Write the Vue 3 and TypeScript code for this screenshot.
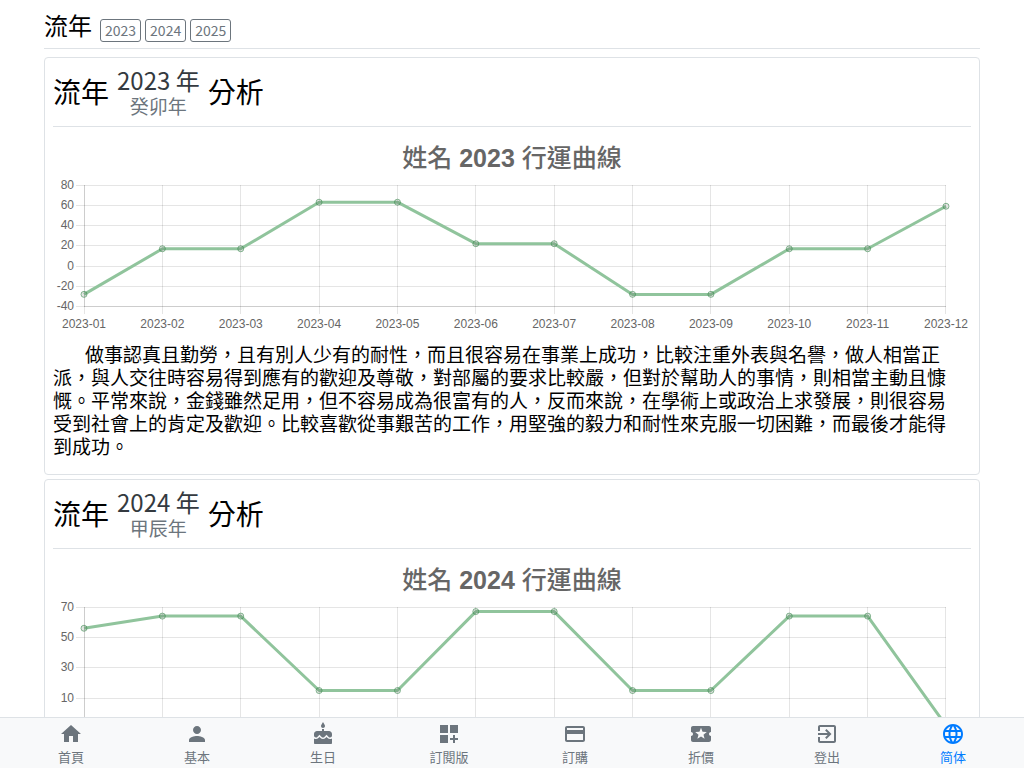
<script setup lang="ts">
interface YearReport {
  year: number
  ganzhi: string
  max: number
  min: number
  step: number
  values: number[]
  text?: string
}

interface NavItem {
  label: string
  icon: string
  active?: boolean
}

const years = [2023, 2024, 2025]

const reports: YearReport[] = [
  {
    year: 2023,
    ganzhi: '癸卯年',
    max: 80,
    min: -40,
    step: 20,
    values: [-28, 17, 17, 63, 63, 22, 22, -28, -28, 17, 17, 59],
    text: '做事認真且勤勞，且有別人少有的耐性，而且很容易在事業上成功，比較注重外表與名譽，做人相當正派，與人交往時容易得到應有的歡迎及尊敬，對部屬的要求比較嚴，但對於幫助人的事情，則相當主動且慷慨。平常來說，金錢雖然足用，但不容易成為很富有的人，反而來說，在學術上或政治上求發展，則很容易受到社會上的肯定及歡迎。比較喜歡從事艱苦的工作，用堅強的毅力和耐性來克服一切困難，而最後才能得到成功。',
  },
  {
    year: 2024,
    ganzhi: '甲辰年',
    max: 70,
    min: -10,
    step: 20,
    values: [56, 64, 64, 15, 15, 67, 67, 15, 15, 64, 64, -8],
  },
]

const area = { left: 31, right: 893, top: 58, bottom: 179.5 }

const xAt = (i: number): number => area.left + ((area.right - area.left) * i) / 11
const yAt = (r: YearReport, v: number): number =>
  area.top + ((r.max - v) / (r.max - r.min)) * (area.bottom - area.top)
const crisp = (n: number): number => Math.floor(n) + 0.5

const ticks = (r: YearReport): number[] => {
  const out: number[] = []
  for (let v = r.max; v >= r.min; v -= r.step) out.push(v)
  return out
}
const month = (r: YearReport, i: number): string => `${r.year}-${String(i + 1).padStart(2, '0')}`
const line = (r: YearReport): string =>
  r.values.map((v, i) => `${xAt(i).toFixed(1)},${yAt(r, v).toFixed(1)}`).join(' ')

const nav: NavItem[] = [
  { label: '首頁', icon: 'M10 20v-6h4v6h5v-8h3L12 3 2 12h3v8z' },
  {
    label: '基本',
    icon: 'M12 12c2.21 0 4-1.79 4-4s-1.79-4-4-4-4 1.79-4 4 1.79 4 4 4zm0 2c-2.67 0-8 1.34-8 4v2h16v-2c0-2.66-5.33-4-8-4z',
  },
  {
    label: '生日',
    icon: 'M12 6c1.11 0 2-.9 2-2 0-.38-.1-.73-.29-1.03L12 0l-1.71 2.97c-.19.3-.29.65-.29 1.03 0 1.1.9 2 2 2zm4.6 9.99l-1.07-1.07-1.08 1.07c-1.3 1.3-3.58 1.31-4.89 0l-1.07-1.07-1.09 1.07C6.75 16.64 5.88 17 4.96 17c-.73 0-1.4-.23-1.96-.61V21c0 .55.45 1 1 1h16c.55 0 1-.45 1-1v-4.61c-.56.38-1.23.61-1.96.61-.92 0-1.79-.36-2.44-1.01zM18 9h-5V7h-2v2H6c-1.66 0-3 1.34-3 3v1.54c0 1.08.88 1.96 1.96 1.96.52 0 1.02-.2 1.38-.57l2.14-2.13 2.13 2.13c.74.74 2.03.74 2.77 0l2.14-2.13 2.13 2.13c.37.37.86.57 1.38.57 1.08 0 1.96-.88 1.96-1.96V12C21 10.34 19.66 9 18 9z',
  },
  {
    label: '訂閱版',
    icon: 'M3 3h8v8H3zM13 3h8v8h-8zM3 13h8v8H3zM18 13h-2v3h-3v2h3v3h2v-3h3v-2h-3z',
  },
  {
    label: '訂購',
    icon: 'M20 4H4c-1.11 0-1.99.89-1.99 2L2 18c0 1.11.89 2 2 2h16c1.11 0 2-.89 2-2V6c0-1.11-.89-2-2-2zm0 14H4v-6h16v6zm0-10H4V6h16v2z',
  },
  {
    label: '折價',
    icon: 'M20 12c0-1.1.9-2 2-2V6c0-1.1-.9-2-2-2H4c-1.1 0-1.99.9-1.99 2v4c1.1 0 1.99.9 1.99 2s-.89 2-2 2v4c0 1.1.9 2 2 2h16c1.1 0 2-.9 2-2v-4c-1.1 0-2-.9-2-2zm-4.42 4.8L12 14.5l-3.58 2.3 1.08-4.12-3.29-2.69 4.24-.25L12 5.8l1.54 3.95 4.24.25-3.29 2.69 1.09 4.11z',
  },
  {
    label: '登出',
    icon: 'M10.09 15.59L11.5 17l5-5-5-5-1.41 1.41L12.67 11H3v2h9.67l-2.58 2.59zM19 3H5c-1.11 0-2 .9-2 2v4h2V5h14v14H5v-4H3v4c0 1.1.89 2 2 2h14c1.1 0 2-.9 2-2V5c0-1.1-.9-2-2-2z',
  },
  {
    label: '简体',
    active: true,
    icon: 'M11.99 2C6.47 2 2 6.48 2 12s4.47 10 9.99 10C17.52 22 22 17.52 22 12S17.52 2 11.99 2zm6.93 6h-2.95c-.32-1.25-.78-2.45-1.38-3.56 1.84.63 3.37 1.91 4.33 3.56zM12 4.04c.83 1.2 1.48 2.53 1.91 3.96h-3.82c.43-1.43 1.08-2.76 1.91-3.96zM4.26 14C4.1 13.36 4 12.69 4 12s.1-1.36.26-2h3.38c-.08.66-.14 1.32-.14 2s.06 1.34.14 2H4.26zm.82 2h2.95c.32 1.25.78 2.45 1.38 3.56-1.84-.63-3.37-1.9-4.33-3.56zm2.95-8H5.08c.96-1.66 2.49-2.93 4.33-3.56C8.81 5.55 8.35 6.75 8.03 8zM12 19.96c-.83-1.2-1.48-2.53-1.91-3.96h3.82c-.43 1.43-1.08 2.76-1.91 3.96zM14.34 14H9.66c-.09-.66-.16-1.32-.16-2s.07-1.35.16-2h4.68c.09.65.16 1.32.16 2s-.07 1.34-.16 2zm.25 5.56c.6-1.11 1.06-2.31 1.38-3.56h2.95c-.96 1.65-2.49 2.93-4.33 3.56zM16.36 14c.08-.66.14-1.32.14-2s-.06-1.34-.14-2h3.38c.16.64.26 1.31.26 2s-.1 1.36-.26 2h-3.38z',
  },
]
</script>

<template>
  <div class="page">
    <main class="content">
      <div class="container">
        <header class="top">
          <h1>流年</h1>
          <div class="years">
            <a v-for="y in years" :key="y" :href="`#y${y}`">{{ y }}</a>
          </div>
        </header>

        <section v-for="r in reports" :id="`y${r.year}`" :key="r.year" class="card">
          <h2 class="card-title">
            <span>流年</span>
            <span class="stack">
              <span class="year">{{ r.year }} 年</span>
              <span class="ganzhi">{{ r.ganzhi }}</span>
            </span>
            <span>分析</span>
          </h2>

          <svg class="chart" viewBox="0 0 918 208" role="img" :aria-label="`姓名 ${r.year} 行運曲線`">
            <text class="chart-title" x="459" y="40"><tspan class="han">姓名</tspan> {{ r.year }} <tspan class="han">行運曲線</tspan></text>
            <g class="grid">
              <line
                v-for="v in ticks(r)"
                :key="v"
                x1="23"
                :x2="area.right"
                :y1="crisp(yAt(r, v))"
                :y2="crisp(yAt(r, v))"
              />
              <line
                v-for="(_, i) in r.values"
                :key="i"
                :x1="Math.min(crisp(xAt(i)), 892.5)"
                :x2="Math.min(crisp(xAt(i)), 892.5)"
                :y1="area.top"
                y2="187"
              />
              <line x1="31.5" x2="31.5" :y1="area.top" y2="180" />
              <line x1="31" x2="893" y1="179.5" y2="179.5" />
            </g>
            <g class="labels">
              <text v-for="v in ticks(r)" :key="v" class="y-label" x="21" :y="yAt(r, v) + 3.5">{{ v }}</text>
              <text v-for="(_, i) in r.values" :key="i" class="x-label" :x="xAt(i)" y="201">{{ month(r, i) }}</text>
            </g>
            <polyline class="curve" :points="line(r)" />
            <circle
              v-for="(v, i) in r.values"
              :key="i"
              class="dot"
              :cx="xAt(i)"
              :cy="yAt(r, v)"
              r="3"
            />
          </svg>

          <p v-if="r.text" class="analysis">{{ r.text }}</p>
        </section>
      </div>
    </main>

    <nav class="bottom-nav">
      <a v-for="n in nav" :key="n.label" href="#" :class="{ active: n.active }">
        <svg viewBox="0 0 24 24" aria-hidden="true"><path :d="n.icon" /></svg>
        <span>{{ n.label }}</span>
      </a>
    </nav>
  </div>
</template>

<style>
body {
  margin: 0;
  background: #fff;
}
</style>

<style scoped>
.page {
  display: flex;
  flex-direction: column;
  height: 100vh;
  color: #000;
  font-family: 'Noto Sans CJK TC', sans-serif;
}

.content {
  flex: 1;
  min-height: 0;
  overflow-y: auto;
  scrollbar-width: none;
}

.container {
  max-width: 936px;
  margin: 0 auto;
  padding: 0 12px;
}

.top {
  display: flex;
  align-items: flex-end;
  gap: 8px;
  margin-bottom: 8px;
  padding: 8px 0 6px;
  border-bottom: 1px solid #dee2e6;
}

.top h1 {
  margin: 0;
  font-size: 24px;
  font-weight: 400;
  line-height: 34px;
}

.years {
  display: flex;
  gap: 4px;
}

.years a {
  padding: 0 4px;
  border: 1px solid #6c757d;
  border-radius: 3px;
  color: #6c757d;
  font-size: 14px;
  line-height: 21px;
  text-decoration: none;
}

.card {
  margin-bottom: 4px;
  padding: 7px 8px 17px;
  border: 1px solid #dee2e6;
  border-radius: 4px;
}

.card-title {
  display: flex;
  align-items: center;
  gap: 8px;
  margin: 0;
  padding-bottom: 9px;
  border-bottom: 1px solid #dee2e6;
  font-size: 28px;
  font-weight: 400;
  line-height: 52px;
}

.stack {
  display: flex;
  flex-direction: column;
  align-items: center;
}

.year {
  color: #343a40;
  font-size: 24px;
  line-height: 29px;
}

.ganzhi {
  color: #6c757d;
  font-size: 19px;
  line-height: 23px;
}

.chart {
  display: block;
  width: 100%;
  height: auto;
}

.chart text {
  fill: #666;
  font-family: 'Liberation Sans', 'Noto Sans CJK TC', sans-serif;
  font-size: 12px;
}

.chart .chart-title {
  font-size: 25px;
  font-weight: 700;
  text-anchor: middle;
}

.chart-title .han {
  font-weight: 500;
}

.y-label {
  text-anchor: end;
}

.x-label {
  text-anchor: middle;
}

.grid line {
  stroke: rgba(0, 0, 0, 0.1);
  stroke-width: 1;
}

.curve {
  fill: none;
  stroke: #90c49c;
  stroke-width: 3;
  stroke-linejoin: round;
}

.dot {
  fill: rgba(0, 0, 0, 0.1);
  stroke: rgba(60, 140, 80, 0.6);
  stroke-width: 1;
}

.analysis {
  margin: 7px 0 0;
  padding-right: 8px;
  font-size: 19px;
  line-height: 23px;
  text-indent: 32px;
}

.bottom-nav {
  display: flex;
  height: 50px;
  padding: 0 8px;
  border-top: 1px solid #dee2e6;
  background: #f8f9fa;
}

.bottom-nav a {
  display: flex;
  flex: 1;
  flex-direction: column;
  align-items: center;
  padding-top: 4px;
  color: #6c757d;
  font-size: 13px;
  line-height: 19px;
  text-decoration: none;
}

.bottom-nav a.active {
  color: #007bff;
}

.bottom-nav svg {
  width: 24px;
  height: 24px;
  margin-bottom: 1px;
  fill: currentColor;
}
</style>
